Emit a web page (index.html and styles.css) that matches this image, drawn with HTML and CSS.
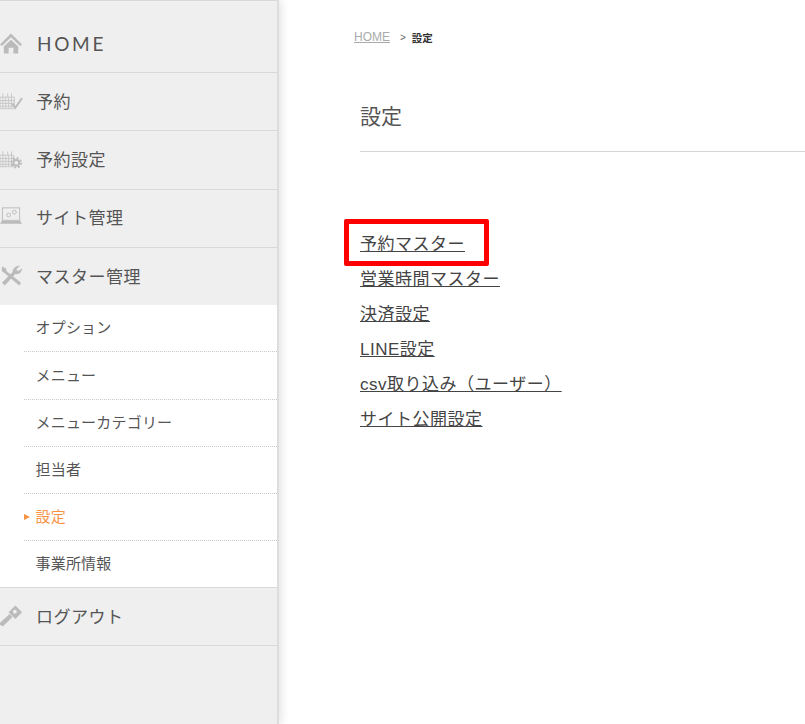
FILE: index.html
```html
<!DOCTYPE html>
<html lang="ja">
<head>
<meta charset="utf-8">
<title>設定</title>
<link rel="stylesheet" href="styles.css">
</head>
<body>
<div class="layout">
  <nav class="sidebar">
    <ul class="menu">
      <li class="item item-home"><a class="item-link">
        <svg class="icon" viewBox="0 0 24 22"><path d="M0 11.500 11.500 0 23 11.500 21 13 11.500 4 2 13Z"/><path d="M4 13.500 11.500 6.500 19 13.500V21H14V15H9V21H4Z"/></svg>
        <span class="home-label">HOME</span></a></li>
      <li class="item"><a class="item-link">
        <svg class="icon" viewBox="0 0 24 22"><g class="light"><path d="M0 7H15V19H0Z" fill="none"/><path d="M0 10.500H15M0 13.500H15M0 16.500H15M3 7V19M6 7V19M9 7V19M12 7V19M3 3V7M8 3V7M12 3V7" fill="none"/></g><path class="check" d="M13 14 16 18 23 8" fill="none"/></svg>
        <span>予約</span></a></li>
      <li class="item"><a class="item-link">
        <svg class="icon" viewBox="0 0 24 22"><g class="light"><path d="M0 7H14V19H0Z" fill="none"/><path d="M0 10.500H14M0 13.500H14M0 16.500H14M3 7V19M6 7V19M9 7V19M12 7V19M3 3V7M8 3V7M12 3V7" fill="none"/></g><circle class="gear" cx="17" cy="15" r="3" fill="none"/><circle class="gear-teeth" cx="17" cy="15" r="5" fill="none"/></svg>
        <span>予約設定</span></a></li>
      <li class="item item-site"><a class="item-link">
        <svg class="icon" viewBox="0 0 24 22"><g class="screen"><rect x="2.500" y="2.500" width="18" height="13" fill="none"/><circle cx="9" cy="10" r="2" fill="none"/><circle cx="15" cy="7" r="2" fill="none"/></g><path d="M2 16H21L23 19H0Z"/></svg>
        <span>サイト管理</span></a></li>
      <li class="item item-open"><a class="item-link">
        <svg class="icon" viewBox="0 0 24 22"><path d="M2 1 6 3 7 6 22 18 20 21 5 8 2 6Z"/><path d="M21 0 17 4 19 6 23 3C23 7 20 10 16 9L5 21 2 18 13 7C13 3 17 0 21 0Z"/></svg>
        <span>マスター管理</span></a>
        <ul class="submenu">
          <li class="sub-item">オプション</li>
          <li class="sub-item">メニュー</li>
          <li class="sub-item">メニューカテゴリー</li>
          <li class="sub-item">担当者</li>
          <li class="sub-item sub-current">設定</li>
          <li class="sub-item">事業所情報</li>
        </ul>
      </li>
      <li class="item"><a class="item-link">
        <svg class="icon" viewBox="0 0 24 22"><path fill-rule="evenodd" d="M16 0 23 7 16 14 9 7ZM15.500 4.500A2 2 0 1 0 15.600 4.500Z"/><path d="M10 9 13 12 3 22 0 20 0 18Z"/></svg>
        <span>ログアウト</span></a></li>
    </ul>
  </nav>
  <main class="content">
    <div class="breadcrumb"><a class="crumb-home">HOME</a><span class="crumb-sep">&gt;</span><strong class="crumb-current">設定</strong></div>
    <h1 class="title">設定</h1>
    <ul class="links">
      <li class="link-row"><a class="link">予約マスター</a><span class="highlight"></span></li>
      <li class="link-row"><a class="link">営業時間マスター</a></li>
      <li class="link-row"><a class="link">決済設定</a></li>
      <li class="link-row"><a class="link">LINE設定</a></li>
      <li class="link-row"><a class="link">csv取り込み（ユーザー）</a></li>
      <li class="link-row"><a class="link">サイト公開設定</a></li>
    </ul>
  </main>
</div>
</body>
</html>
```
FILE: styles.css
```css
* { box-sizing: border-box; }
html, body { margin: 0; height: 100%; }
body {
  font-family: "Liberation Sans", "Noto Sans CJK JP", sans-serif;
  color: #555;
  background: #fff;
  overflow: hidden;
}
ul { list-style: none; margin: 0; padding: 0; }
.layout { display: flex; height: 724px; }
.sidebar {
  width: 277px;
  flex: none;
  background: #efefef;
  border-top: 1px solid #d8d8d8;
  box-shadow: 2px 0 0 #ddd, 5px 0 8px rgba(0,0,0,.1);
}
.item { border-bottom: 1px solid #d9d9d9; }
.item-link {
  display: flex;
  align-items: center;
  height: 57.300px;
  gap: 13px;
  font-size: 17px;
  letter-spacing: .5px;
  padding-bottom: 2px;
}
.item-site .item-link { padding-bottom: 4px; }
.item-home .item-link { height: 71px; padding: 14px 0 0; }
.icon { width: 23px; height: 22px; flex: none; fill: #bbb; stroke: none; }
.light path { stroke: #c8c8c8; stroke-width: 1; }
.check { stroke: #bbb; stroke-width: 2; }
.gear { stroke: #bbb; stroke-width: 2; }
.gear-teeth { stroke: #bbb; stroke-width: 2; stroke-dasharray: 2 1.900; }
.screen rect, .screen circle { stroke: #bbb; stroke-width: 1; }
.home-label { letter-spacing: 2.700px; font-size: 19px; margin-left: 1px; font-family: Lato, "Liberation Sans", sans-serif; }
.submenu { background: #fff; padding-left: 24px; }
.sub-item {
  height: 47px;
  display: flex;
  align-items: center;
  padding: 0 0 2px 11.500px;
  font-size: 15px;
  letter-spacing: .2px;
  border-bottom: 1px dotted #c8c8c8;
}
.sub-item:first-child { height: 47px; padding-bottom: 3px; }
.sub-item:nth-child(2) { height: 47.500px; }
.sub-item:last-child { border-bottom: 0; height: 46.500px; }
.sub-current { color: #f7954a; position: relative; }
.sub-current::before {
  content: "";
  position: absolute;
  left: 0;
  top: 20px;
  border-left: 6px solid #f7923f;
  border-top: 3.500px solid transparent;
  border-bottom: 3.500px solid transparent;
}
.content { flex: 1; padding: 30px 0 0 83px; min-width: 0; }
.breadcrumb { display: flex; align-items: center; height: 14px; margin-left: -6px; font-size: 12px; }
.crumb-home { color: #aaa; text-decoration: underline; }
.crumb-sep { color: #666; font-size: 10px; margin: 0 6px 0 10px; }
.crumb-current { color: #333; font-size: 10.500px; font-weight: 700; }
.title {
  margin: 56px 0 0;
  padding: 0 0 17px;
  font-size: 21px;
  font-weight: 400;
  line-height: 34px;
  border-bottom: 1px solid #d4d4d4;
}
.links { margin-top: 75px; font-size: 17px; letter-spacing: .5px; }
.link-row { position: relative; height: 35.100px; line-height: 35px; }
.link { color: #444; text-decoration: underline; }
.highlight {
  position: absolute;
  left: -16px;
  top: -8px;
  width: 145px;
  height: 47px;
  border: 5px solid #f00;
  border-radius: 2px;
}
```
